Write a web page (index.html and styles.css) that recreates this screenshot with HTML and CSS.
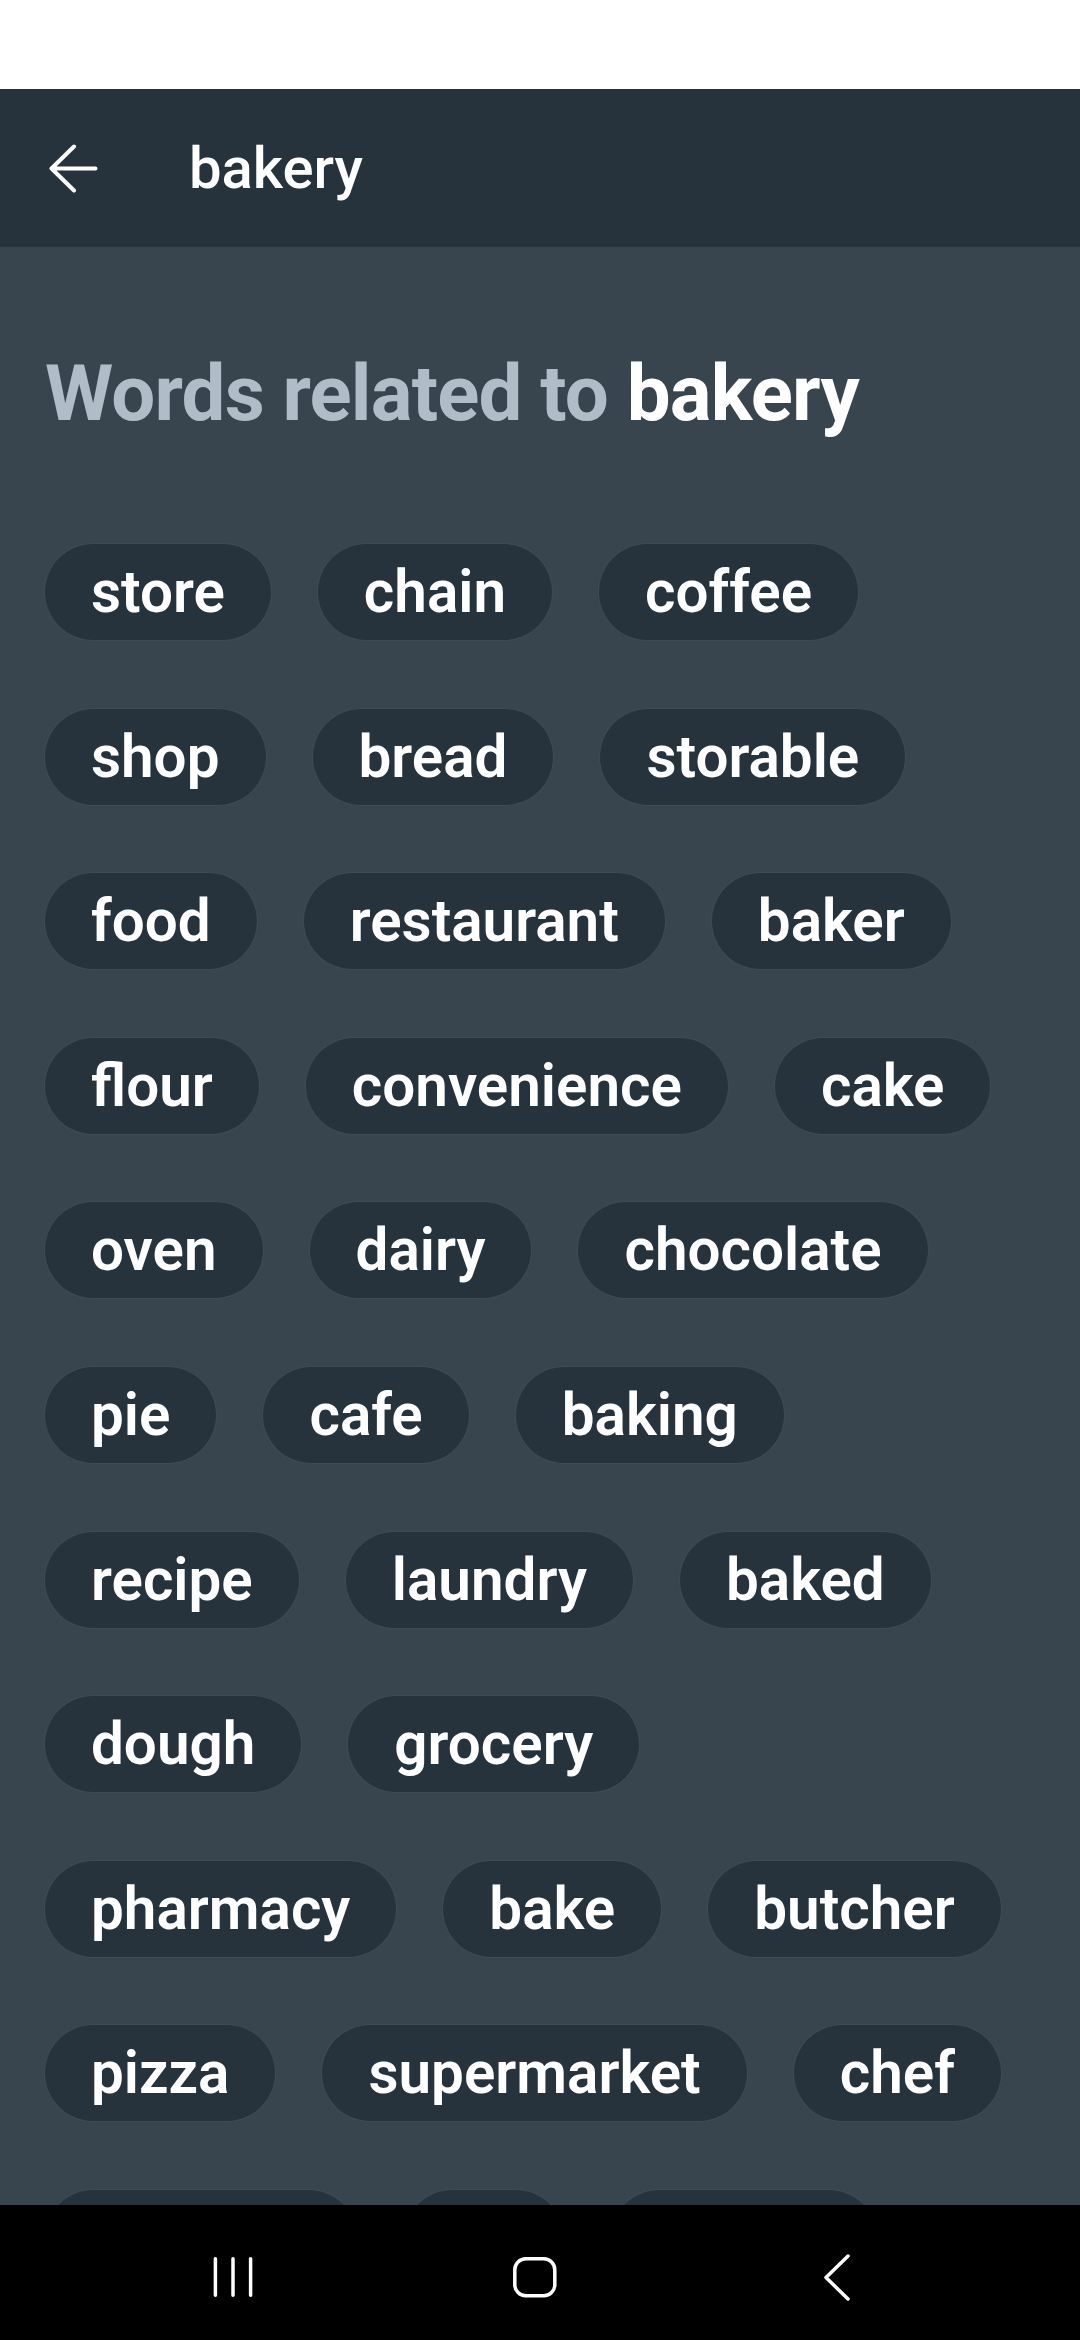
FILE: index.html
```html
<!DOCTYPE html>
<html lang="en">
<head>
<meta charset="utf-8">
<title>bakery</title>
<link rel="stylesheet" href="styles.css">
</head>
<body>
<div class="screen">
  <div class="status"></div>
  <header class="appbar">
    <svg class="back" width="49" height="49" viewBox="0 0 49 49" aria-hidden="true">
      <path d="M2.5 24.5H46.5 M25 2.5L2.5 24.5L25 46.5" fill="none" stroke="#fff" stroke-width="4" stroke-linecap="round" stroke-linejoin="round"/>
    </svg>
    <div class="apptitle">bakery</div>
  </header>
  <main class="content">
    <h1 class="heading"><span class="muted">Words related to </span><span class="word">bakery</span></h1>
    <div class="rows">
      <div class="row"><span class="chip">store</span><span class="chip">chain</span><span class="chip">coffee</span></div>
      <div class="row"><span class="chip">shop</span><span class="chip">bread</span><span class="chip">storable</span></div>
      <div class="row"><span class="chip">food</span><span class="chip">restaurant</span><span class="chip">baker</span></div>
      <div class="row"><span class="chip">flour</span><span class="chip">convenience</span><span class="chip">cake</span></div>
      <div class="row"><span class="chip">oven</span><span class="chip">dairy</span><span class="chip">chocolate</span></div>
      <div class="row"><span class="chip">pie</span><span class="chip">cafe</span><span class="chip">baking</span></div>
      <div class="row"><span class="chip">recipe</span><span class="chip">laundry</span><span class="chip">baked</span></div>
      <div class="row"><span class="chip">dough</span><span class="chip">grocery</span></div>
      <div class="row"><span class="chip">pharmacy</span><span class="chip">bake</span><span class="chip">butcher</span></div>
      <div class="row"><span class="chip">pizza</span><span class="chip">supermarket</span><span class="chip">chef</span></div>
      <div class="row"><span class="chip">pancake</span><span class="chip">tin</span><span class="chip">cookie</span></div>
    </div>
  </main>
  <nav class="navbar">
    <svg class="nav-icon" width="42" height="44" viewBox="0 0 42 44" aria-hidden="true">
      <path d="M3.4 3.8V40.2 M21 3.8V40.2 M38.6 3.8V40.2" stroke="#fff" stroke-width="3.5" stroke-linecap="round" fill="none"/>
    </svg>
    <svg class="nav-icon nav-home" width="44" height="41" viewBox="0 0 44 41" aria-hidden="true">
      <rect x="1.8" y="1.8" width="40" height="37" rx="11" ry="11" fill="none" stroke="#fff" stroke-width="3.5"/>
    </svg>
    <svg class="nav-icon nav-back" width="30" height="48" viewBox="0 0 30 48" aria-hidden="true">
      <path d="M25 3L3 24.5L25 46" fill="none" stroke="#fff" stroke-width="3.5" stroke-linecap="round" stroke-linejoin="round"/>
    </svg>
  </nav>
</div>
</body>
</html>
```
FILE: styles.css
```css
html, body {
  margin: 0;
  padding: 0;
  background: #000;
}

.screen {
  width: 1080px;
  height: 2340px;
  display: flex;
  flex-direction: column;
  overflow: hidden;
  font-family: Roboto, "Liberation Sans", sans-serif;
  background: #38454f;
}

.status {
  height: 89px;
  flex: none;
  background: #ffffff;
}

.appbar {
  height: 158px;
  flex: none;
  background: #27333c;
  display: flex;
  align-items: center;
  padding-left: 49px;
  box-sizing: border-box;
}

.back {
  display: block;
  flex: none;
}

.apptitle {
  margin-left: 91px;
  color: #ffffff;
  font-size: 58px;
  font-weight: 500;
  line-height: 66px;
}

.content {
  flex: 1;
  overflow: hidden;
  padding: 99px 45px 0;
  min-height: 0;
}

.heading {
  margin: 0 0 102px;
  font-size: 78px;
  line-height: 96px;
  font-weight: 700;
  letter-spacing: -0.8px;
}

.muted {
  color: #b0bdc8;
}

.word {
  color: #ffffff;
}

.rows {
  display: flex;
  flex-direction: column;
  gap: 68.6px;
}

.row {
  display: flex;
  gap: 47px;
}

.chip {
  height: 96px;
  box-sizing: border-box;
  padding: 0 46px;
  border-radius: 48px;
  background: #27333c;
  box-shadow: 0 0 0 1px #3e4b55;
  color: #ffffff;
  font-size: 58.4px;
  font-weight: 600;
  line-height: 96px;
  white-space: nowrap;
}

.navbar {
  height: 135px;
  flex: none;
  background: #000000;
  display: flex;
  align-items: center;
  justify-content: flex-start;
  padding: 9px 0 0 212px;
  box-sizing: border-box;
}

.nav-icon {
  display: block;
  flex: none;
}

.nav-home {
  margin-left: 259px;
}

.nav-back {
  margin-left: 266px;
}
```
